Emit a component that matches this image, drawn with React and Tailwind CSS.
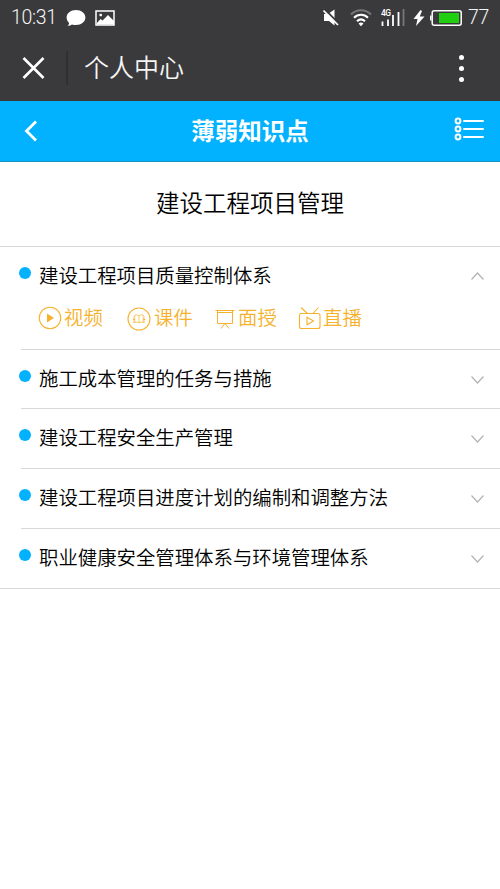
import { useState } from "react"

const topics = [
  { title: "建设工程项目质量控制体系", height: "h-[103px]" },
  { title: "施工成本管理的任务与措施", height: "h-[59px]" },
  { title: "建设工程安全生产管理", height: "h-[60px]" },
  { title: "建设工程项目进度计划的编制和调整方法", height: "h-[60px]" },
  { title: "职业健康安全管理体系与环境管理体系", height: "h-[59px]" },
]

function StatusBar() {
  return (
    <div className="flex h-[35px] items-center pl-[11px] pr-[11px] font-['Roboto',sans-serif] text-[19.5px] font-light text-[#f4f4f4]">
      <span className="w-[45px] whitespace-nowrap tracking-[-0.3px]">10:31</span>
      <svg className="ml-[10px]" width="20" height="18" viewBox="0 0 20 18" fill="#fff">
        <path d="M10 1c5.300 0 9.400 3.200 9.400 7.500S15.300 16 10 16c-1.500 0-2.800-.2-4-.6-1.100.8-2.500 1.400-4.400 1.400.9-.9 1.500-1.900 1.500-2.900C1.500 12.500.6 10.700.6 8.500.6 4.200 4.700 1 10 1z" />
      </svg>
      <svg className="ml-[9px]" width="20" height="16" viewBox="0 0 20 16">
        <rect x="1" y="1" width="18" height="14" fill="none" stroke="#fff" strokeWidth="1.500" />
        <path d="M2 14.500v-1.500l3.500-4 2 1.500L13 5l6 6v3.500z" fill="#fff" />
        <rect x="4.500" y="3.800" width="2.400" height="2.400" fill="#fff" />
      </svg>

      <svg className="ml-auto" width="16" height="18" viewBox="0 0 16 18">
        <path d="M1 5h4L11.500.5v16L6 12H1z" fill="#fff" />
        <path d="M1.500 0l15 15.500" stroke="#3a3a3d" strokeWidth="2" />
        <path d="M.5 1.500l14.500 14.500" stroke="#fff" strokeWidth="1.700" />
      </svg>
      <svg className="ml-[11px]" width="22" height="18" viewBox="0 0 22 18" fill="none" strokeWidth="2">
        <path d="M1 5.500C6.500-.2 15.500-.2 21 5.500" stroke="#77777a" />
        <path d="M4 8.800c4-4 10-4 14 0M7 12.300c2.500-2.500 5.500-2.500 8 0" stroke="#fff" />
        <path d="M8.500 14.500c1.500-1.500 3.500-1.500 5 0L11 17.300z" fill="#fff" />
      </svg>
      <svg className="ml-[9px]" width="24" height="18" viewBox="0 0 24 18">
        <text x="0" y="6.800" fill="#fff" fontSize="8.500" fontWeight="500" fontFamily="Roboto, sans-serif" textLength="10">4G</text>
        <path d="M1.500 12.500V17M7 10.500V17M12 6v11M17.500 3v14" stroke="#fff" strokeWidth="1.800" />
        <path d="M22.500 0v17" stroke="#77777a" strokeWidth="1.800" />
      </svg>
      <svg className="ml-[8px]" width="12" height="16" viewBox="0 0 12 16" fill="#fff">
        <path d="M7.500 0L.5 9h4L3 16l8.500-9.500H6.800L9 1z" />
      </svg>
      <svg className="ml-[5px]" width="33" height="16" viewBox="0 0 33 16">
        <rect x="2.200" y=".8" width="29" height="14.400" rx="2" fill="none" stroke="#fff" strokeWidth="1.500" />
        <path d="M.8 5.500v5" stroke="#fff" strokeWidth="1.500" />
        <rect x="9" y="3" width="20" height="10" fill="#20cf10" />
      </svg>
      <span className="ml-[5px] w-[21px] whitespace-nowrap tracking-[-0.3px]">77</span>
    </div>
  )
}

function TitleBar() {
  return (
    <div className="flex h-[66px] items-center pl-[22px] pr-[36px]">
      <svg width="24" height="24" viewBox="0 0 24 24" stroke="#fff" strokeWidth="2.600">
        <path d="M1.500 2l20 20M21.500 2l-20 20" />
      </svg>
      <div className="ml-[20px] h-[34px] w-[2px] bg-[#303033]" />
      <span className="mb-[3px] ml-[16px] text-[25px] font-[350] leading-none text-[#f5f5f5]">个人中心</span>
      <div className="ml-auto flex flex-col gap-[6px]">
        <i className="size-[5px] rounded-full bg-white" />
        <i className="size-[5px] rounded-full bg-white" />
        <i className="size-[5px] rounded-full bg-white" />
      </div>
    </div>
  )
}

function Resources() {
  return (
    <div className="flex h-[26px] items-center pl-[38px] text-[19.4px] font-[350] leading-none text-[#f6b12d]">
      <svg width="24" height="24" viewBox="0 0 24 24" fill="none" stroke="currentColor">
        <circle cx="12" cy="12" r="10.700" strokeWidth="1.100" />
        <path d="M9 7.500l7 4.500-7 4.500z" fill="currentColor" stroke="none" />
      </svg>
      <span className="mb-[2px] ml-[2px] w-[39px] whitespace-nowrap">视频</span>

      <svg className="ml-[24px] mt-px" width="24" height="24" viewBox="0 0 24 24" fill="none" stroke="currentColor">
        <circle cx="12" cy="12" r="11" strokeWidth="1.100" />
        <path d="M12 8.800C10.500 7.800 9 7.700 7.800 8v7.200c1.500-.3 3-.2 4.200.8 1.200-1 2.700-1.100 4.200-.8V8c-1.200-.3-2.700-.2-4.200.8zM12 9v7" strokeWidth=".7" />
        <path d="M6.500 9.500v1M17.500 9.500v1M6.500 14.500v1h2M17.500 14.500v1h-2" strokeWidth=".7" />
        <circle cx="6.800" cy="12.500" r="1" fill="currentColor" stroke="none" />
        <circle cx="17.200" cy="12.500" r="1" fill="currentColor" stroke="none" />
      </svg>
      <span className="mb-[2px] ml-[3px] w-[39px] whitespace-nowrap">课件</span>

      <svg className="ml-[21px] mt-[2px]" width="22" height="22" viewBox="0 0 22 22" fill="none" stroke="currentColor">
        <path d="M1.500 2.500h19M3.500 2.500v13h15v-13M3.500 4.500h15M11 15.500L7 20.500M11 15.500l4 5" />
      </svg>
      <span className="mb-[2px] ml-[2px] w-[39px] whitespace-nowrap">面授</span>

      <svg className="ml-[20px]" width="24" height="26" viewBox="0 0 24 26" fill="none" stroke="currentColor" strokeWidth="1.100">
        <rect x="2.500" y="8.500" width="20.500" height="15" rx="2" />
        <path d="M4 2.500L10.500 8.500M21.500 2.500L16 8.500M10 12.300v7.400l6.500-3.700z" />
      </svg>
      <span className="mb-[2px] ml-[2px] w-[39px] whitespace-nowrap">直播</span>
    </div>
  )
}

function Topic({ title, height, open, last, onClick }) {
  return (
    <div>
      <div className={height}>
        <button onClick={onClick} className="flex h-[58px] w-full items-center pl-[19px] pr-[16px] text-left">
          <i className="mb-[7px] size-[12px] shrink-0 rounded-full bg-[#02b2ff]" />
          <span className="mb-[2px] ml-[8px] whitespace-nowrap text-[19.4px] font-[350] leading-none text-black">{title}</span>
          <svg
            className={open ? "ml-auto rotate-180" : "ml-auto mt-px"}
            width="13"
            height="8"
            viewBox="0 0 13 8"
            fill="none"
            stroke="#b3b3b3"
            strokeWidth="1.200"
          >
            <path d="M.5.500l6 6.500 6-6.500" />
          </svg>
        </button>
        {open && <Resources />}
      </div>
      {!last && <div className="-mt-px ml-[21px] h-px bg-[#d7d7d7]" />}
    </div>
  )
}

export default function App() {
  const [openIndex, setOpenIndex] = useState(0)

  return (
    <div className="min-h-[889px] w-[500px] bg-white font-['Noto_Sans_CJK_SC',sans-serif]">
      <div className="h-[101px] bg-[#3a3a3d]">
        <StatusBar />
        <TitleBar />
      </div>

      <header className="flex h-[61px] items-center border-b border-[#1790c5] bg-[#02b2ff] pl-[24px] pr-[16px]">
        <svg width="14" height="22" viewBox="0 0 14 22" fill="none" stroke="#fff" strokeWidth="2.800">
          <path d="M12 1.500L2.500 11l9.500 9.500" />
        </svg>
        <h1 className="mx-auto pl-[8px] text-[23.500px] font-bold leading-none text-white">薄弱知识点</h1>
        <svg className="mb-[5px]" width="30" height="24" viewBox="0 0 30 24" fill="none" stroke="#fff" strokeWidth="2">
          <circle cx="4" cy="4" r="2.400" />
          <circle cx="4" cy="12" r="2.400" />
          <circle cx="4" cy="20" r="2.400" />
          <path d="M10 4h19M10 12h19M10 20h19" strokeLinecap="round" />
        </svg>
      </header>

      <h2 className="flex h-[85px] items-center justify-center border-b border-[#d7d7d7] pb-[3px] text-[23.500px] font-[350] leading-none text-black">
        建设工程项目管理
      </h2>

      <div className="border-b border-[#d7d7d7]">
        {topics.map((topic, i) => (
          <Topic
            key={topic.title}
            title={topic.title}
            height={topic.height}
            open={openIndex === i}
            last={i === topics.length - 1}
            onClick={() => setOpenIndex(openIndex === i ? -1 : i)}
          />
        ))}
      </div>
    </div>
  )
}
